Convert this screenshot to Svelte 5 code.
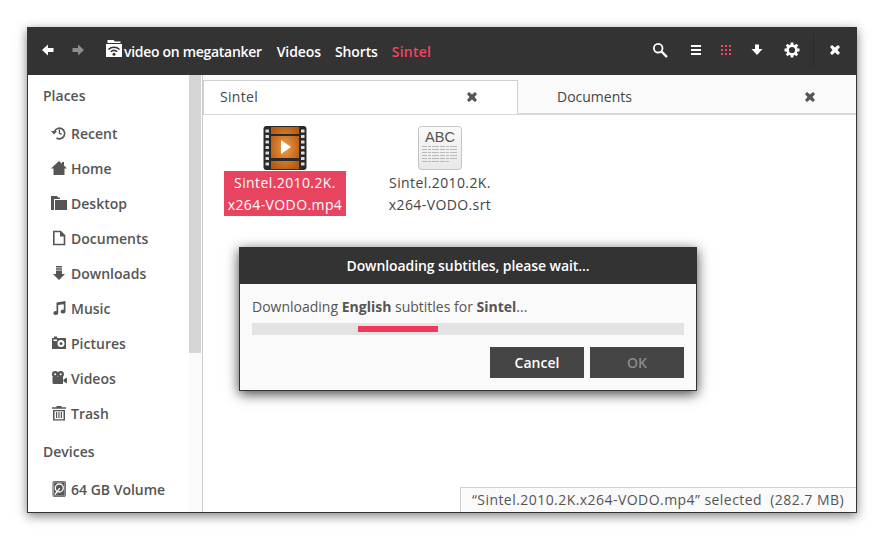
<script>
  const places = [
    { name: 'Recent', icon: 'recent' },
    { name: 'Home', icon: 'home' },
    { name: 'Desktop', icon: 'desktop' },
    { name: 'Documents', icon: 'doc' },
    { name: 'Downloads', icon: 'downloads' },
    { name: 'Music', icon: 'music' },
    { name: 'Pictures', icon: 'pictures' },
    { name: 'Videos', icon: 'videos' },
    { name: 'Trash', icon: 'trash' }
  ]
  const tabs = [
    { name: 'Sintel', active: true },
    { name: 'Documents', active: false }
  ]
  const perfs = [0, 1, 2, 3, 4, 5, 6]
</script>

{#snippet cross(color)}
  <svg class="cross" width="12" height="12" viewBox="0 0 12 12"><path fill={color} d="M3 1l3 2.5L9 1l2 2-2.5 3L11 9l-2 2-3-2.5L3 11 1 9l2.5-3L1 3z"/></svg>
{/snippet}

{#snippet placeIcon(kind)}
  <svg class="place-icon" width="16" height="16" viewBox="0 0 16 16" fill="#555">
    {#if kind === 'recent'}
      <path fill="none" stroke="#555" stroke-width="1.7" d="M3.600 6.200A5.300 5.300 0 1 1 5.500 13"/>
      <path d="M0 6h6l-3 3.400z"/>
      <path fill="none" stroke="#555" stroke-width="1.400" d="M8.400 4.500v3.600l2.200 1.200"/>
    {:else if kind === 'home'}
      <path d="M8 1l3 2.700V2h2v3.500l3 2.900H13.500V15h-11V8.400H0z"/>
    {:else if kind === 'desktop'}
      <path d="M0 1h6l1 1.500H9V4H3v11H0z"/><path d="M4 5h12v10H4z"/>
    {:else if kind === 'doc'}
      <path fill="none" stroke="#555" stroke-width="1.600" d="M2.800 1.500h6.700l4 4v9H2.800z"/>
      <path d="M9 1.500h1l4 4v1H9z"/>
    {:else if kind === 'downloads'}
      <path d="M5 1h6v1.400H5zM5 3.300h6v1.400H5zM5 5.600h6V9h3l-6 6-6-6h3z"/>
    {:else if kind === 'music'}
      <path d="M5.500 2.500L14.500 1v10.500a2.400 1.900 0 1 1-1.700-1.800V4.200L7.200 5v8a2.400 1.900 0 1 1-1.700-1.800z"/>
    {:else if kind === 'pictures'}
      <path fill-rule="evenodd" d="M1 3h2V1.500h3V3h8.500A.5.5 0 0 1 15 3.500v10a.5.5 0 0 1-.5.5h-13a.5.5 0 0 1-.5-.5zM10 5a3.500 3.500 0 1 0 0 7 3.500 3.500 0 0 0 0-7zM10 7a1.500 1.500 0 1 1 0 3 1.500 1.500 0 0 1 0-3zM2.500 4.500v1.500H6V4.500z"/>
    {:else if kind === 'videos'}
      <circle cx="4.200" cy="4.300" r="3.200"/><circle cx="9.700" cy="4.300" r="3.200"/>
      <path d="M1.500 7h10.500v7H3a1.500 1.500 0 0 1-1.500-1.500zM12.500 9.500L16 7.500v6l-3.500-2z"/>
      <circle cx="4.200" cy="4.300" r="1" fill="#fff"/><circle cx="9.700" cy="4.300" r="1" fill="#fff"/>
    {:else if kind === 'trash'}
      <path d="M5.500 1h5v1.200H15v1.600H1V2.200h4.500z"/>
      <path fill-rule="evenodd" d="M2 5h12v10.500H2zM3.500 6.200v8h9v-8z"/>
      <path d="M5 7h1.200v6H5zM7.400 7h1.200v6H7.400zM9.800 7H11v6H9.800z"/>
    {/if}
  </svg>
{/snippet}

<div class="page">
  <div class="window">
    <header class="toolbar">
      <button class="nav" aria-label="Back">
        <svg width="14" height="14" viewBox="0 0 14 14"><path fill="#fff" d="M7 1.500v3.500h5.500v4H7v3.500L1 7z"/></svg>
      </button>
      <button class="nav" aria-label="Forward">
        <svg width="14" height="14" viewBox="0 0 14 14"><path fill="#8e8e8e" d="M7 1.500v3.500H1.500v4H7v3.500L13 7z"/></svg>
      </button>
      <nav class="crumbs">
        <svg class="share" width="16" height="18" viewBox="0 0 16 18">
          <path fill="#fff" d="M1.500 0h6l1.500 1.500h5.500V3H1.500zM0 4h16v13H0z"/>
          <path fill="none" stroke="#333" stroke-width="1.500" d="M2.500 9.500a8 8 0 0 1 11 0M4.700 11.800a5 5 0 0 1 6.600 0"/>
          <circle cx="8" cy="14.300" r="1.500" fill="#333"/>
        </svg>
        <span class="crumb first">video on megatanker</span>
        <span class="crumb">Videos</span>
        <span class="crumb">Shorts</span>
        <span class="crumb current">Sintel</span>
      </nav>
      <div class="tools">
        <svg class="search" width="16" height="16" viewBox="0 0 16 16">
          <circle cx="6.200" cy="6.200" r="4.300" fill="none" stroke="#fff" stroke-width="1.800"/>
          <path stroke="#fff" stroke-width="2.400" stroke-linecap="round" d="M10 10l4.300 4.300"/>
        </svg>
        <svg class="list" width="12" height="12" viewBox="0 0 12 12">
          <path fill="#fff" d="M1 1h10v2H1zM1 5h10v2H1zM1 9h10v2H1z"/>
        </svg>
        <svg class="grid" width="10" height="10" viewBox="0 0 10 10">
          <path fill="#f2445c" d="M0 0h2v2H0zM4 0h2v2H4zM8 0h2v2H8zM0 4h2v2H0zM4 4h2v2H4zM8 4h2v2H8zM0 8h2v2H0zM4 8h2v2H4zM8 8h2v2H8z"/>
        </svg>
        <svg class="down" width="12" height="12" viewBox="0 0 12 12">
          <path fill="#fff" d="M4 .5h4v4.500h3.500L6 11 .5 5H4z"/>
        </svg>
        <svg class="gear" width="16" height="16" viewBox="0 0 16 16">
          <circle cx="8" cy="8" r="4.400" fill="none" stroke="#fff" stroke-width="2.600"/>
          <path stroke="#fff" stroke-width="2.800" d="M8 .5v3M8 12.500v3M.5 8h3M12.500 8h3M2.700 2.700l2.100 2.100M11.200 11.200l2.100 2.100M13.300 2.700l-2.100 2.100M4.800 11.200l-2.100 2.100"/>
        </svg>
        <div class="sep"></div>
        {@render cross('#fff')}
      </div>
    </header>

    <div class="body">
      <aside class="sidebar">
        <h3>Places</h3>
        <ul>
          {#each places as place}
            <li>{@render placeIcon(place.icon)}{place.name}</li>
          {/each}
        </ul>
        <h3 class="devices">Devices</h3>
        <ul>
          <li>
            <svg class="place-icon" width="16" height="18" viewBox="0 0 16 18">
              <rect x="1.500" y="1" width="13.500" height="16" rx="2" fill="#555"/>
              <rect x="2.600" y="2.100" width="11.300" height="13.800" rx="1.200" fill="none" stroke="#ddd" stroke-width="0.600"/>
              <circle cx="8.300" cy="8" r="4" fill="none" stroke="#fff" stroke-width="1.300"/>
              <path stroke="#fff" stroke-width="1.300" d="M4 14.500l4.800-6.300"/>
            </svg>
            64 GB Volume
          </li>
        </ul>
      </aside>
      <div class="scrollbar"><div class="thumb"></div></div>

      <main class="content">
        <div class="tabs">
          {#each tabs as tab}
            <div class="tab" class:active={tab.active}>
              <span>{tab.name}</span>
              {@render cross('#555')}
            </div>
          {/each}
        </div>

        <div class="files">
          <div class="file">
            <svg width="44" height="46" viewBox="0 0 44 46">
              <defs>
                <radialGradient id="film" cx="0.5" cy="0.5" r="0.6">
                  <stop offset="0" stop-color="#f09a45"/><stop offset="1" stop-color="#b55a12"/>
                </radialGradient>
              </defs>
              <rect x="0.500" y="1" width="43" height="44" rx="3" fill="#2a2a2a"/>
              <rect x="8" y="2" width="28" height="42" fill="url(#film)"/>
              <path fill="#2a2a2a" d="M8 9h28v2H8zM8 33h28v3H8z"/>
              {#each perfs as p}
                <rect x="2.500" y={4.500 + p * 5.500} width="3.500" height="3" rx="0.500" fill="#ddd"/>
                <rect x="38" y={4.500 + p * 5.500} width="3.500" height="3" rx="0.500" fill="#ddd"/>
              {/each}
              <path fill="#fff" d="M18 15l10 7-10 7z"/>
            </svg>
            <div class="label selected">Sintel.2010.2K.<br />x264-VODO.mp4</div>
          </div>
          <div class="file">
            <svg width="46" height="46" viewBox="0 0 46 46">
              <defs>
                <linearGradient id="paper" x1="0" y1="0" x2="0" y2="1">
                  <stop offset="0" stop-color="#fafafa"/><stop offset="1" stop-color="#e8e8e8"/>
                </linearGradient>
              </defs>
              <rect x="1.500" y="1.500" width="43" height="43" rx="3" fill="url(#paper)" stroke="#c4c4c4"/>
              <text x="23" y="17" text-anchor="middle" class="abc">ABC</text>
              <path stroke="#a0a0a0" stroke-width="0.700" stroke-dasharray="5 1 3 1 7 1" d="M5 21.500h36M5 24.500h36M5 27.500h36M5 30.500h36M5 33.500h36M5 36.500h28"/>
            </svg>
            <div class="label">Sintel.2010.2K.<br />x264-VODO.srt</div>
          </div>
        </div>

        <div class="status">“Sintel.2010.2K.x264-VODO.mp4” selected  (282.7 MB)</div>
      </main>
    </div>

    <div class="dialog">
      <div class="dialog-title">Downloading subtitles, please wait...</div>
      <div class="dialog-body">
        <p>Downloading <b>English</b> subtitles for <b>Sintel</b>...</p>
        <div class="progress"><div class="bar"></div></div>
        <div class="actions">
          <button class="btn">Cancel</button>
          <button class="btn disabled">OK</button>
        </div>
      </div>
    </div>
  </div>
</div>

<style>
  :global(body) {
    background: #fff;
    font-family: "Open Sans", "Noto Sans", sans-serif;
  }

  .page {
    width: 883px;
    height: 539px;
    padding: 27px 26px 26px 27px;
    box-sizing: border-box;
    overflow: hidden;
  }

  .window {
    position: relative;
    height: 486px;
    display: flex;
    flex-direction: column;
    border: 1px solid #333;
    border-top: 0;
    box-sizing: border-box;
    box-shadow: 0 3px 10px rgba(0, 0, 0, 0.5);
    background: #fff;
  }

  .toolbar {
    height: 48px;
    flex: none;
    margin: 0 -1px;
    padding: 0 0 0 6px;
    display: flex;
    align-items: center;
    background: #333;
  }

  .nav {
    width: 30px;
    height: 30px;
    padding: 0;
    border: 0;
    background: none;
    display: flex;
    align-items: center;
    justify-content: center;
    margin-top: -2px;
  }

  .crumbs {
    display: flex;
    align-items: center;
    margin-left: 13px;
    color: #fff;
    font-size: 14px;
    font-weight: 600;
    letter-spacing: -0.1px;
  }

  .share {
    margin: -4px 2px 0 0;
  }

  .crumb {
    margin-right: 14px;
  }

  .first {
    letter-spacing: -0.3px;
    margin-right: 15px;
  }

  .current {
    color: #f2445c;
    letter-spacing: 0.2px;
  }

  .tools {
    margin-left: auto;
    display: flex;
    align-items: center;
    height: 34px;
    margin-top: -3px;
  }

  .search { margin-right: 22px; }
  .list { margin-right: 19px; }
  .grid { margin-right: 20px; }
  .down { margin-right: 21px; }
  .gear { margin-right: 13px; }

  .sep {
    width: 1px;
    height: 34px;
    background: #2a2a2a;
    margin-right: 15px;
  }

  .tools .cross {
    margin-right: 16px;
  }

  .body {
    flex: 1;
    min-height: 0;
    display: flex;
  }

  .sidebar {
    width: 161px;
    flex: none;
    overflow: hidden;
    color: #555;
    font-size: 14px;
    font-weight: 600;
  }

  h3 {
    margin: 0;
    padding: 12px 0 0 15px;
    line-height: 18px;
    font-size: 14px;
    font-weight: 600;
    height: 18px;
  }

  .devices {
    padding-top: 12px;
  }

  ul {
    list-style: none;
    margin: 0;
    padding: 11px 0 0 23px;
  }

  li {
    height: 35px;
    display: flex;
    align-items: center;
    gap: 4px;
  }

  .place-icon {
    flex: none;
    margin-top: -2px;
  }

  .scrollbar {
    width: 13px;
    flex: none;
    background: #fafafa;
    border-right: 1px solid #ccc;
  }

  .thumb {
    width: 12px;
    height: 278px;
    background: #d6d6d6;
  }

  .content {
    position: relative;
    flex: 1;
    min-width: 0;
    display: flex;
    flex-direction: column;
    background: #fff;
  }

  .tabs {
    height: 40px;
    flex: none;
    display: flex;
    box-sizing: border-box;
    background: #fafafa;
    border-bottom: 2px solid #d8d8d8;
  }

  .tab {
    flex: 1;
    display: flex;
    align-items: center;
    justify-content: space-between;
    padding: 5px 40px 0 39px;
    color: #444;
    font-size: 14px;
  }

  .tab.active {
    flex: none;
    width: 315px;
    box-sizing: border-box;
    margin-top: 5px;
    margin-bottom: -1px;
    padding: 0 39px 2px 16px;
    background: #fff;
    border: 1px solid #d0d0d0;
    border-bottom: 0;
    letter-spacing: 0.3px;
  }

  .files {
    display: flex;
    gap: 31px;
    padding: 10px 0 0 20px;
  }

  .file {
    display: flex;
    flex-direction: column;
    align-items: center;
    width: 124px;
  }

  .file svg {
    height: 46px;
  }

  .abc {
    font-family: "Liberation Sans", sans-serif;
    font-size: 14.5px;
    fill: #555;
  }

  .label {
    padding: 1px 4px 0;
    text-align: center;
    font-size: 14px;
    line-height: 22px;
    letter-spacing: 0.4px;
    color: #444;
    white-space: nowrap;
  }

  .label.selected {
    background: #e9445f;
    color: #fff;
  }

  .status {
    position: absolute;
    right: 0;
    bottom: 0;
    height: 25px;
    padding: 0 12px 0 11px;
    box-sizing: border-box;
    line-height: 24px;
    font-size: 14px;
    letter-spacing: 0.45px;
    color: #555;
    white-space: pre;
    background: #fafafa;
    border: 1px solid #d0d0d0;
    border-width: 1px 0 0 1px;
  }

  .dialog {
    position: absolute;
    left: 211px;
    top: 220px;
    width: 458px;
    height: 144px;
    box-sizing: border-box;
    border: 1px solid #333;
    border-top: 0;
    background: #fafafa;
    box-shadow: 0 3px 12px rgba(0, 0, 0, 0.75);
  }

  .dialog-title {
    margin: 0 -1px;
    height: 37px;
    line-height: 37px;
    background: #333;
    color: #fff;
    text-align: center;
    font-size: 14px;
    font-weight: 600;
    letter-spacing: -0.08px;
  }

  .dialog-body {
    padding: 13px 12px 0 12px;
    color: #555;
    font-size: 14px;
  }

  p {
    margin: 0 0 6px;
    line-height: 20px;
  }

  .progress {
    height: 12px;
    background: #e3e3e3;
    padding-top: 3px;
    box-sizing: border-box;
  }

  .bar {
    width: 80px;
    height: 6px;
    margin-left: 106px;
    background: #f2385a;
  }

  .actions {
    display: flex;
    justify-content: flex-end;
    gap: 6px;
    margin-top: 12px;
  }

  .btn {
    width: 94px;
    height: 31px;
    padding: 0;
    border: 0;
    background: #454545;
    color: #fff;
    font-family: inherit;
    font-size: 14px;
    font-weight: 600;
  }

  .btn.disabled {
    color: #8a8a8a;
  }
</style>
